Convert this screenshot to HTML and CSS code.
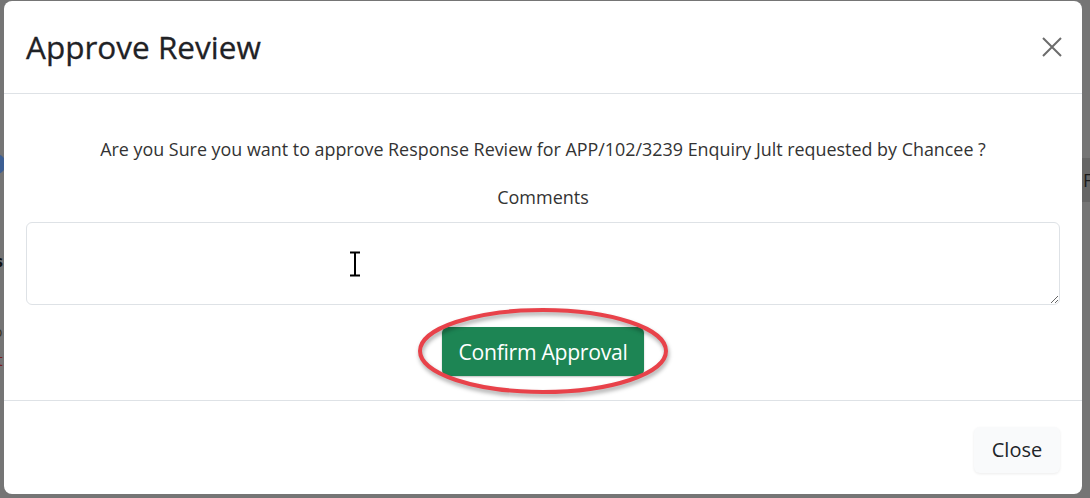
FILE: index.html
```html
<!DOCTYPE html>
<html lang="en">
<head>
<meta charset="utf-8">
<title>Approve Review</title>
<link rel="stylesheet" href="styles.css">
</head>
<body>
<div class="page">
  <div class="behind">
    <span class="bg-dot"></span>
    <span class="bg-s">s</span>
    <span class="bg-o">o</span>
    <span class="bg-t">t</span>
    <span class="bg-band"><span class="bg-f">F</span></span>
  </div>
  <div class="modal">
    <div class="modal-header">
      <h4 class="modal-title">Approve Review</h4>
      <button class="btn-x" aria-label="Close">
        <svg width="20" height="20" viewBox="0 0 20 20"><path d="M1 1 L19 19 M19 1 L1 19" stroke="#6c6c6c" stroke-width="2" fill="none"/></svg>
      </button>
    </div>
    <div class="modal-body">
      <p class="question">Are you Sure you want to approve Response Review for APP/102/3239 Enquiry Jult requested by Chancee ?</p>
      <label class="comments-label" for="comments">Comments</label>
      <div class="field">
        <textarea id="comments" class="comments"></textarea>
        <svg class="ibeam" width="14" height="26" viewBox="0 0 14 26"><path d="M2 1.5 H6 M8 1.5 H12 M7 2 V24 M2 24.5 H6 M8 24.5 H12 M6 1.5 H8 M6 24.5 H8" stroke="#000" stroke-width="2" fill="none"/></svg>
      </div>
      <div class="actions">
        <button class="btn-confirm">Confirm Approval</button>
        <svg class="annot" width="262" height="98" viewBox="0 0 262 98"><ellipse cx="131" cy="46" rx="123" ry="41" fill="none" stroke="#e8424a" stroke-width="4"/></svg>
      </div>
    </div>
    <div class="modal-footer">
      <button class="btn-close">Close</button>
    </div>
  </div>
</div>
</body>
</html>
```
FILE: styles.css
```css
* { box-sizing: border-box; }
html, body { margin: 0; padding: 0; }
body {
  background: #757575;
  font-family: "Open Sans", "Noto Sans", sans-serif;
  color: #212529;
  width: 1090px;
  height: 498px;
  overflow: hidden;
}
.page {
  position: relative;
  width: 1090px;
  height: 498px;
  padding: 1px 0 0 4px;
}
.behind { position: absolute; inset: 0; }
.bg-dot {
  position: absolute; left: -14px; top: 154px;
  width: 20px; height: 20px; border-radius: 50%;
  background: #3d5f93;
}
.bg-s { position: absolute; left: -5px; top: 250px; font: bold 16px "Open Sans", sans-serif; color: #111; }
.bg-o { position: absolute; left: -6px; top: 322px; font: 14px "Open Sans", sans-serif; color: #3a3220; }
.bg-t { position: absolute; left: -3px; top: 349px; font: 16px "Open Sans", sans-serif; color: #7a1e22; }
.bg-band {
  position: absolute; left: 1082px; top: 158px; width: 8px; height: 44px;
  background: #666;
}
.bg-f { position: absolute; left: 1px; top: 10px; font: 18px "Open Sans", sans-serif; color: #1b1b1b; }

.modal {
  position: relative;
  width: 1078px;
  height: 493px;
  background: #fff;
  border-radius: 8px;
  display: flex;
  flex-direction: column;
}
.modal-header {
  height: 93px;
  border-bottom: 1px solid #dee2e6;
  display: flex;
  align-items: center;
  justify-content: space-between;
  padding: 0 20px 2px 22px;
}
.modal-title {
  margin: 0;
  font-size: 31.5px;
  font-weight: 500;
  color: #1f2226;
  letter-spacing: 0px;
  -webkit-text-stroke: 0.3px #1f2226;
}
.btn-x {
  border: 0; background: transparent; padding: 0; width: 20px; height: 20px;
  display: flex; margin-top: 1px;
}
.modal-body {
  flex: 1;
  padding: 43px 22px 0;
  display: flex;
  flex-direction: column;
  align-items: center;
}
.question {
  margin: 0;
  font-size: 17.9px;
  line-height: 24px;
  color: #333;
}
.comments-label {
  margin-top: 24px;
  font-size: 18px;
  line-height: 24px;
  color: #333;
}
.field { position: relative; width: 100%; margin-top: 13px; }
.comments {
  display: block;
  width: 100%;
  height: 83px;
  border: 1px solid #dee2e6;
  border-radius: 6px;
  resize: vertical;
  font: 16px "Open Sans", sans-serif;
  padding: 6px 12px;
}
.ibeam { position: absolute; left: 322px; top: 29px; }
.actions {
  position: relative;
  margin-top: 22px;
  display: flex;
  justify-content: center;
  width: 100%;
}
.btn-confirm {
  background: #1d8554;
  color: #fff;
  border: 0;
  border-radius: 6px;
  width: 202px;
  height: 49px;
  font: 21.2px "Open Sans", sans-serif;
  letter-spacing: -0.3px;
  box-shadow: 0 1px 2px rgba(0,0,0,0.25);
}
.annot {
  position: absolute;
  left: 50%;
  top: -22px;
  transform: translateX(-50%);
  filter: drop-shadow(1px 3px 2px rgba(0,0,0,0.35));
}
.modal-footer {
  height: 94px;
  border-top: 1px solid #dee2e6;
  display: flex;
  align-items: center;
  justify-content: flex-end;
  padding: 4px 22px 0;
}
.btn-close {
  background: #f9fafb;
  border: 0;
  border-radius: 6px;
  width: 86px;
  height: 46px;
  font: 20px "Open Sans", sans-serif;
  color: #212529;
  box-shadow: 0 1px 3px rgba(0,0,0,0.08);
}
```
